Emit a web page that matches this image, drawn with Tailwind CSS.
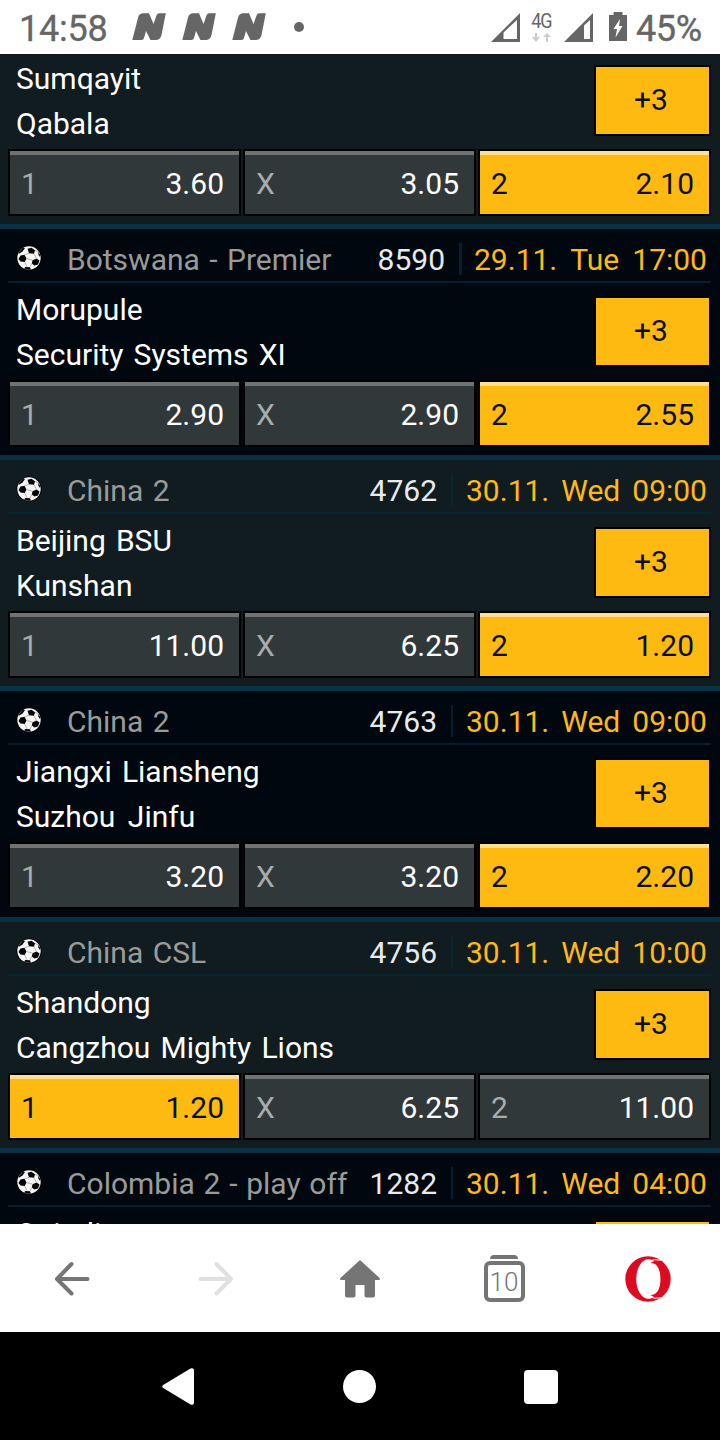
<!DOCTYPE html>
<html lang="en">
<head>
<meta charset="utf-8">
<title>Odds</title>
<script src="https://cdn.jsdelivr.net/npm/@tailwindcss/browser@4"></script>
</head>
<body class="w-[720px] h-[1440px] overflow-hidden flex flex-col bg-black font-[Roboto,sans-serif]">
<svg class="hidden">
  <symbol id="n" viewBox="0 0 34 27"><path d="M6.2 4Q7.2 .7 10.500 .3H17L21.500 11L24.500 2.500Q25.300 .3 27.500 .3H33.800L29.500 22Q28.500 27 23.500 27H18.500L14 18L12 25Q11.500 27 9.500 27H.3Z" fill="#666"/></symbol>
  <symbol id="ball" viewBox="0 0 26 26">
    <circle cx="13" cy="13" r="12.500" fill="#000"/><circle cx="13" cy="12.900" r="11.700" fill="#f6f6f6"/>
    <g fill="#050505"><path d="M11.500 3.800L15.500 2.800L19 5.200L18 8.800L13 8.300Z"/><path d="M4.500 10.500L8.500 9.800L10.500 13.500L8.700 17L4.500 16.500L2.500 14Z"/><path d="M16.500 15.200L20.500 13.500L23.500 15.500L22 19.500L18.500 20.500L15.800 18.500Z"/><path d="M3 7L7 2.500L9 3L6.500 6.500L2.500 9Z"/><path d="M9.500 22L14 22.200L15 24.600L11 24.500L8 23.300Z"/><path d="M22.300 6.500L24.300 10.500L24 12L22.300 9.500Z"/></g>
    <path d="M8.500 9.800L13 8.300M10.500 13.500L16.500 15.200M18 8.800L20.500 13.500M8.700 17L11 22M15.800 18.500L14 22M19 5.200L22 7" fill="none" stroke="#999" stroke-width=".7"/>
  </symbol>
</svg>

<header class="h-[54px] shrink-0 bg-white flex items-start text-[#666] pl-[19px] pr-[18px]">
  <div class="text-[36px] leading-[42px] mt-[8px] w-[113px] tracking-[-0.2px] [-webkit-text-stroke:0.3px_#666]">14:58</div>
  <div class="flex gap-4 mt-[13px]">
    <svg class="w-[34px] h-[27px]"><use href="#n"/></svg>
    <svg class="w-[34px] h-[27px]"><use href="#n"/></svg>
    <svg class="w-[34px] h-[27px]"><use href="#n"/></svg>
  </div>
  <div class="size-[10px] rounded-full bg-[#666] mt-[22px] ml-[28px]"></div>
  <div class="ml-auto flex items-start">
    <svg class="w-[29px] h-[29px] mt-[13px]" viewBox="0 0 29 29"><path fill-rule="evenodd" d="M29 0V29H0ZM26 7L12.500 19.500V26H26Z" fill="#666"/></svg>
    <div class="flex flex-col items-center w-[22px] ml-[10px] mr-px mt-[10px]">
      <div class="text-[20px] leading-[22px] tracking-[-1px] scale-x-90">4G</div>
      <svg class="w-[19px] h-[9px] mt-[1px]" viewBox="0 0 19 9"><path d="M3 0H5V4H8L4 9L0 4H3ZM14 9H16V4H19L15 0L11 4H14Z" fill="#ccc"/></svg>
    </div>
    <svg class="w-[29px] h-[29px] ml-[11px] mt-[13px]" viewBox="0 0 29 29"><path fill-rule="evenodd" d="M29 0V29H0ZM26 7L20 12.500V26H26Z" fill="#666"/></svg>
    <svg class="w-[18px] h-[29px] ml-[16px] mt-[12px]" viewBox="0 0 18 29"><path d="M4.500 0H13.500V3H18V29H0V3H4.500Z" fill="#666"/><path d="M11 7L4.500 17H8L6.500 25.500L13.500 14H10Z" fill="#fff"/></svg>
    <div class="text-[36px] leading-[42px] mt-[8px] ml-[9px] w-[66px] whitespace-nowrap tracking-[-0.4px] [-webkit-text-stroke:0.4px_#666]">45%</div>
  </div>
</header>

<main id="list" class="flex-1 min-h-0 overflow-hidden text-[30px] leading-[45px] whitespace-nowrap [word-spacing:2.7px]"></main>

<nav class="h-[108px] shrink-0 bg-white grid grid-cols-5 items-center justify-items-center pt-[2px]">
  <svg class="w-[36px] h-[36px]" viewBox="0 0 36 36"><path d="M17.500 3L3 18L17.500 32.500M3 18H33.500" fill="none" stroke="#757575" stroke-width="4" stroke-linecap="round" stroke-linejoin="round"/></svg>
  <svg class="w-[36px] h-[36px]" viewBox="0 0 36 36"><path d="M18.500 3L33 18L18.500 32.500M33 18H2.500" fill="none" stroke="#e0e0e0" stroke-width="4" stroke-linecap="round" stroke-linejoin="round"/></svg>
  <svg class="w-[42px] h-[38px]" viewBox="0 0 42 38"><path d="M21 0L40.600 18Q41.500 20 40 20H36V35.500Q36 37.500 34 37.500H27.500Q25.500 37.500 25.500 35.500V25H16.500V35.500Q16.500 37.500 14.500 37.500H8Q6 37.500 6 35.500V20H2Q.5 20 1.400 18Z" fill="#757575"/></svg>
  <div class="flex flex-col items-center mb-px">
    <div class="w-[28px] h-[4px] rounded-t-[4px] bg-[#757575]"></div>
    <div class="mt-[2px] w-[41px] h-[41px] rounded-[6px] border-4 border-[#757575] text-[#757575] text-[26px] leading-[34px] font-light flex justify-center">10</div>
  </div>
  <svg class="w-[46px] h-[46px]" viewBox="0 0 46 46"><circle cx="23" cy="23" r="22.700" fill="#dd0a20"/><ellipse cx="23.500" cy="23" rx="12.300" ry="19.800" fill="#fff"/><path d="M25.500 7C30 4 34 3.300 37.500 5.200L41 23L37.500 40.800C34 42.700 30 42 25.500 39C32 39 35.600 33 35.600 23S32 7 25.500 7Z" fill="#dd0a20"/><path d="M24 5.300Q29 2.800 36 4.200M24 40.700Q29 43.200 36 41.800" stroke="#fff" stroke-width="1" fill="none"/></svg>
</nav>

<footer class="h-[108px] shrink-0 bg-black flex items-center justify-between pl-[162px] pr-[162px]">
  <svg class="w-[32px] h-[37px]" viewBox="0 0 32 37"><path d="M1.200 17L28.500 .6Q32 -.5 32 2.500V34.500Q32 37.500 28.500 36.400L1.200 20Q-.8 18.500 1.200 17Z" fill="#fff"/></svg>
  <div class="size-[33px] rounded-full bg-white ml-px"></div>
  <div class="size-[34px] rounded-[4px] bg-white mt-[1px]"></div>
</footer>

<script>
const matches = [
  {a:'Sumqayit',b:'Qabala',o:['3.60','3.05','2.10'],s:2},
  {l:'Botswana - Premier',n:'8590',d:['29.11.','Tue','17:00'],a:'Morupule',b:'Security Systems XI',o:['2.90','2.90','2.55'],s:2},
  {l:'China 2',n:'4762',d:['30.11.','Wed','09:00'],a:'Beijing BSU',b:'Kunshan',o:['11.00','6.25','1.20'],s:2},
  {l:'China 2',n:'4763',d:['30.11.','Wed','09:00'],a:'Jiangxi Liansheng',b:'Suzhou Jinfu',wide:true,o:['3.20','3.20','2.20'],s:2},
  {l:'China CSL',n:'4756',d:['30.11.','Wed','10:00'],a:'Shandong',b:'Cangzhou Mighty Lions',o:['1.20','6.25','11.00'],s:0},
  {l:'Colombia 2 - play off',n:'1282',d:['30.11.','Wed','04:00'],a:'Quindio'},
];
const cell = (k, v, on) => `<div class="h-[67px] border-2 border-black pl-[11px] pr-[15px] ${on ? 'bg-[#ffba12] text-[#0a0f12] shadow-[inset_0_4px_0_#ffdf96]' : 'bg-[#313839] text-white shadow-[inset_0_4px_0_#6f7374]'} flex justify-between leading-[65px]"><span class="${on ? '' : 'text-[#a8acac]'}">${k}</span><span>${v}</span></div>`;
document.getElementById('list').innerHTML = matches.map((m, i) => {
  const dark = i % 2 === 1;
  const head = m.l ? `<div class="h-[54px] ml-2 mr-[9px] border-b-2 ${dark ? 'border-[#091d30]' : 'border-[#07262f]'} flex items-start pl-2 pr-1">
      <svg class="size-[26px] mt-[16px] shrink-0" viewBox="0 0 26 26"><use href="#ball" width="26" height="26"/></svg>
      <span class="ml-[25px] mt-[8px] text-[#9a9b99] ${i === 5 ? '[word-spacing:1.3px]' : '[word-spacing:2px]'}">${m.l}</span>
      <span class="ml-auto mt-[8px] text-[#e8eaec]">${m.n}</span>
      <i class="${i === 1 ? 'w-[3px] mr-[12px]' : 'w-[2px] mr-[13px]'} h-[32px] ml-[14px] mt-[14px] shrink-0 ${dark ? 'bg-[#091d30]' : 'bg-[#07262f]'}"></i>
      <span class="mt-[8px] text-[#ffba12] flex justify-between ${i === 1 ? 'w-[233px]' : 'w-[241px]'}"><span>${m.d[0]}</span><span>${m.d[1]}</span><span>${m.d[2]}</span></span>
    </div>` : '';
  return `<section class="${dark ? 'bg-[#00070e]' : 'bg-[#111c21]'} ${m.l ? '' : '-mt-[2px]'} border-b-5 ${dark ? 'border-[#0a2f46]' : 'border-[#093345]'}">${head}
    <div class="pl-2 pr-[9px] pb-2">
      <div class="h-[97px] flex justify-between items-start">
        <div class="pl-2 pt-[4px] text-white flex flex-col items-start"><span>${m.a}</span>${m.b ? `<span class="${m.wide ? '[word-spacing:5px]' : ''}">${m.b}</span>` : ''}</div>
        <div class="mt-[13px] w-[117px] h-[71px] border-2 border-black bg-[#ffba12] text-[#0a0f12] leading-[65px] text-center pr-[3px]">${m.o ? '+3' : ''}</div>
      </div>
      ${m.o ? `<div class="grid grid-cols-3 gap-[2px]">${cell('1', m.o[0], m.s === 0)}${cell('X', m.o[1], m.s === 1)}${cell('2', m.o[2], m.s === 2)}</div>` : ''}
    </div></section>`;
}).join('');
</script>
</body>
</html>
